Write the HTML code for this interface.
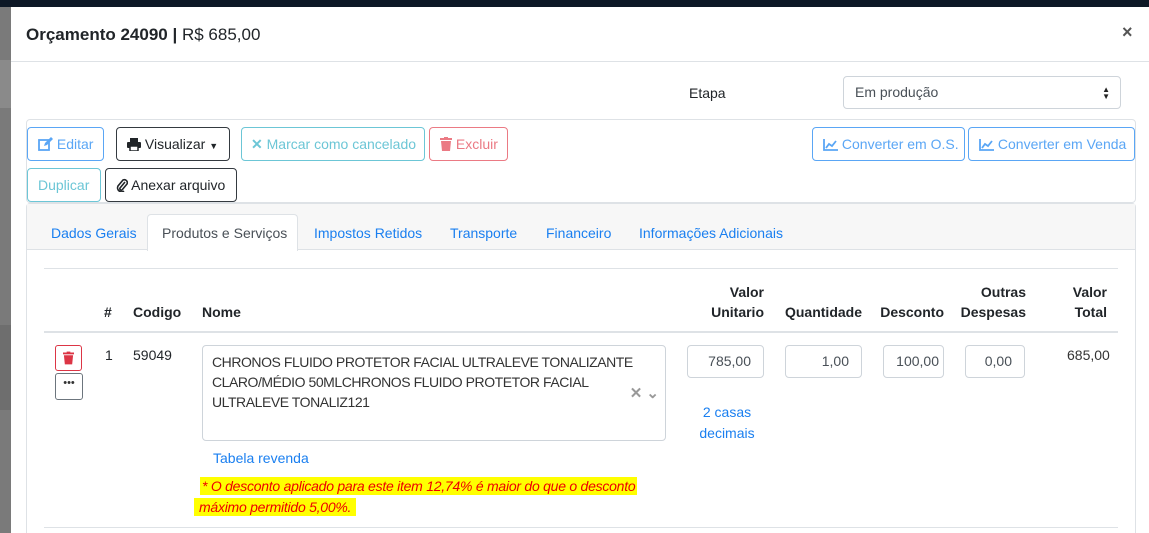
<!DOCTYPE html>
<html style="overflow:hidden;width:1149px;height:533px"><head><meta charset="utf-8"><style>
*{box-sizing:border-box;margin:0;padding:0}
body{width:1149px;height:533px;overflow:hidden;background:#7a7a7a;font-family:"Liberation Sans",sans-serif;font-size:14px;color:#212529;position:relative}
.a{position:absolute}
.top{left:0;top:0;width:1149px;height:7px;background:#0d1826}
.modal{left:11px;top:7px;width:1138px;height:526px;background:#fff}
.btn{position:absolute;height:34px;border:1px solid;border-radius:4px;font-size:14px;line-height:32px;padding:0 10px;white-space:nowrap;background:#fff}
.btn svg{vertical-align:-2px}
.bp{border-color:#5aa6f5;color:#5aa6f5}
.bd{border-color:#343a40;color:#212529}
.bi{border-color:#6cc6d6;color:#6cc6d6}
.br{border-color:#eb7a84;color:#eb7a84}
.th{position:absolute;font-weight:bold;font-size:14px;line-height:20px;text-align:right}
.inp{position:absolute;height:33px;border:1px solid #ced4da;border-radius:4px;text-align:right;padding-right:12px;line-height:31px;color:#495057;font-size:14px;top:345px;background:#fff}
.tab{position:absolute;top:225px;color:#1a7ff0;font-size:14px}
</style></head><body>
<div class="a top"></div>
<div class="a" style="left:0;top:60px;width:11px;height:48px;background:#8a8a8a"></div>
<div class="a" style="left:0;top:325px;width:11px;height:85px;background:#6e6e6e"></div>
<div class="a modal"></div>
<div class="a" style="left:26px;top:25px;font-size:17px;color:#212529"><b>Orçamento 24090 |</b> R$ 685,00</div>
<div class="a" style="left:1122px;top:22px;font-size:18px;color:#555;font-weight:bold">×</div>
<div class="a" style="left:11px;top:61px;width:1138px;height:1px;background:#dee2e6"></div>
<div class="a" style="left:689px;top:85px;font-size:14px">Etapa</div>
<div class="a" style="left:843px;top:76px;width:278px;height:33px;border:1px solid #ced4da;border-radius:4px;padding-left:11px;line-height:31px;color:#495057">Em produção<span style="position:absolute;right:10px;top:-1px;font-size:8px;color:#222;line-height:7px;padding-top:10px">▲<br>▼</span></div>
<div class="a" style="left:26px;top:119px;width:1110px;height:84px;border:1px solid #dee2e6;border-radius:4px"></div>
<div class="btn bp" style="left:27px;top:127px;width:77px"><svg width="15" height="14" viewBox="0 0 15 14"><rect x="1" y="3" width="10" height="10" fill="none" stroke="#5aa6f5" stroke-width="1.8"/><path d="M6 9l1-3 6-6 2 2-6 6z" fill="#5aa6f5"/></svg> Editar</div>
<div class="btn bd" style="left:116px;top:127px;width:114px"><svg width="14" height="13" viewBox="0 0 14 13"><rect x="3" y="0" width="8" height="4" fill="#212529"/><rect x="0" y="4" width="14" height="6" rx="1" fill="#212529"/><rect x="3" y="8" width="8" height="5" fill="#fff" stroke="#212529" stroke-width="1.5"/></svg> Visualizar <span style="font-size:9px">▼</span></div>
<div class="btn bi" style="left:241px;top:127px;width:184px;padding:0 9px"><b>✕</b> Marcar como cancelado</div>
<div class="btn br" style="left:429px;top:127px;width:79px;padding:0 10px"><svg width="12" height="14" viewBox="0 0 12 14"><rect x="0" y="1" width="12" height="2" fill="#eb7a84"/><rect x="4" y="0" width="4" height="2" fill="#eb7a84"/><path d="M1 4h10l-1 10H2z" fill="#eb7a84"/></svg> Excluir</div>
<div class="btn bp" style="left:812px;top:127px;width:153px"><svg width="15" height="12" viewBox="0 0 15 12"><path d="M1 0v11h14" fill="none" stroke="#5aa6f5" stroke-width="1.8"/><path d="M3 9l3-4 3 2 4-5" fill="none" stroke="#5aa6f5" stroke-width="1.8"/></svg> Converter em O.S.</div>
<div class="btn bp" style="left:968px;top:127px;width:167px"><svg width="15" height="12" viewBox="0 0 15 12"><path d="M1 0v11h14" fill="none" stroke="#5aa6f5" stroke-width="1.8"/><path d="M3 9l3-4 3 2 4-5" fill="none" stroke="#5aa6f5" stroke-width="1.8"/></svg> Converter em Venda</div>
<div class="btn bi" style="left:27px;top:168px;width:74px">Duplicar</div>
<div class="btn bd" style="left:105px;top:168px;width:132px"><svg width="12" height="14" viewBox="0 0 12 14"><path d="M9 4L4 10a1.5 1.5 0 0 0 2 2l5-6a3 3 0 0 0-4-4L2 8a4 4 0 0 0 6 5" fill="none" stroke="#212529" stroke-width="1.6"/></svg> Anexar arquivo</div>
<div class="a" style="left:26px;top:203px;width:1110px;height:330px;border:1px solid #dee2e6;border-bottom:none;border-radius:4px 4px 0 0;background:#fff"></div>
<div class="a" style="left:27px;top:204px;width:1108px;height:46px;background:#f7f7f7;border-bottom:1px solid #dee2e6"></div>
<div class="a" style="left:147px;top:214px;width:151px;height:37px;background:#fff;border:1px solid #dee2e6;border-bottom:none;border-radius:4px 4px 0 0"></div>
<div class="tab" style="left:51px">Dados Gerais</div>
<div class="tab" style="left:162px;color:#495057">Produtos e Serviços</div>
<div class="tab" style="left:314px">Impostos Retidos</div>
<div class="tab" style="left:450px">Transporte</div>
<div class="tab" style="left:546px">Financeiro</div>
<div class="tab" style="left:639px">Informações Adicionais</div>
<div class="a" style="left:44px;top:268px;width:1074px;height:1px;background:#dee2e6"></div>
<div class="a" style="left:44px;top:331px;width:1074px;height:2px;background:#dee2e6"></div>
<div class="a" style="left:44px;top:527px;width:1074px;height:1px;background:#dee2e6"></div>
<div class="th" style="left:104px;top:302px">#</div>
<div class="th" style="left:133px;top:302px">Codigo</div>
<div class="th" style="left:202px;top:302px">Nome</div>
<div class="th" style="left:690px;top:282px;width:74px">Valor<br>Unitario</div>
<div class="th" style="left:780px;top:302px;width:82px">Quantidade</div>
<div class="th" style="left:880px;top:302px;width:64px">Desconto</div>
<div class="th" style="left:950px;top:282px;width:76px">Outras<br>Despesas</div>
<div class="th" style="left:1040px;top:282px;width:67px">Valor<br>Total</div>
<div class="a" style="left:55px;top:345px;width:27px;height:26px;border:1px solid #dc3545;border-radius:3px;text-align:center;padding-top:5px"><svg width="11" height="14" viewBox="0 0 12 14"><rect x="0" y="1" width="12" height="2" fill="#dc3545"/><rect x="4" y="0" width="4" height="2" fill="#dc3545"/><path d="M1 4h10l-1 10H2z" fill="#dc3545"/></svg></div>
<div class="a" style="left:55px;top:373px;width:28px;height:27px;border:1px solid #6c757d;border-radius:3px;text-align:center;line-height:18px;font-size:11px;color:#333">•••</div>
<div class="a" style="left:105px;top:347px">1</div>
<div class="a" style="left:133px;top:347px">59049</div>
<div class="a" style="left:202px;top:345px;width:464px;height:96px;border:1px solid #ced4da;border-radius:4px;padding:6px 30px 0 9px;line-height:20px;font-size:14px;letter-spacing:-0.45px;color:#333">CHRONOS FLUIDO PROTETOR FACIAL ULTRALEVE TONALIZANTE CLARO/MÉDIO 50MLCHRONOS FLUIDO PROTETOR FACIAL ULTRALEVE TONALIZ121<span style="position:absolute;right:6px;top:38px;color:#999;font-weight:bold;font-size:15px;letter-spacing:0">✕ ⌄</span></div>
<div class="a" style="left:213px;top:450px;color:#1a7ff0">Tabela revenda</div>
<div class="a" style="left:200px;top:477px;background:#ffff00;color:#e00;font-style:italic;font-size:14px;line-height:18px;padding:0 2px;letter-spacing:-0.25px">* O desconto aplicado para este item 12,74% é maior do que o desconto</div>
<div class="a" style="left:194px;top:498px;background:#ffff00;color:#e00;font-style:italic;font-size:14px;line-height:18px;padding:0 5px;letter-spacing:-0.25px">máximo permitido 5,00%.</div>
<div class="inp" style="left:687px;width:77px">785,00</div>
<div class="inp" style="left:785px;width:77px">1,00</div>
<div class="inp" style="left:883px;width:61px;padding-right:4px;overflow:hidden">100,00</div>
<div class="inp" style="left:965px;width:60px">0,00</div>
<div class="a" style="left:1067px;top:347px;color:#333">685,00</div>
<div class="a" style="left:690px;top:402px;width:74px;text-align:center;color:#1a7ff0;line-height:21px">2 casas<br>decimais</div>
</body></html>
